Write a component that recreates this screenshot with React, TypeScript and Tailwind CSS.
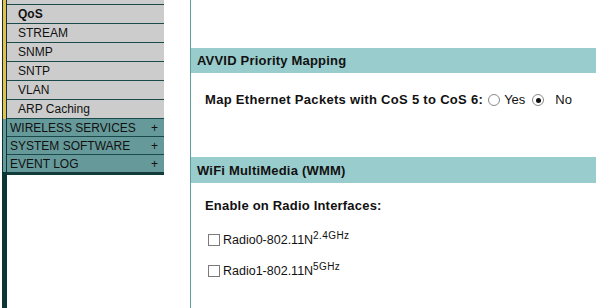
import React from "react";

const subItems = ["STREAM", "SNMP", "SNTP", "VLAN", "ARP Caching"];
const topItems = ["WIRELESS SERVICES", "SYSTEM SOFTWARE", "EVENT LOG"];

const Radio: React.FC<{ checked?: boolean }> = ({ checked }) => (
  <span className="w-[12px] h-[12px] rounded-full border border-[#8a8a8a] bg-white flex items-center justify-center shrink-0">
    {checked && <span className="w-[5px] h-[5px] rounded-full bg-[#111]" />}
  </span>
);

const Checkbox: React.FC = () => (
  <span className="w-[12px] h-[12px] border border-[#7a7a7a] bg-white shrink-0" />
);

const App: React.FC = () => {
  return (
    <div className="flex w-[596px] h-[308px] bg-white overflow-hidden text-[#111] font-['Liberation_Sans',Arial,sans-serif]">
      {/* left nav */}
      <div className="w-[190px] shrink-0 flex pl-[2px]">
        <div className="w-[5px] h-full bg-[#0d3535] flex flex-col px-[1px]">
          <div className="h-[119px] bg-[#e8c050]" />
          <div className="h-[53px] bg-[#669999]" />
        </div>
        <div className="w-[157px] flex flex-col text-[12px]">
          <div className="h-[5px] bg-[#cccccc] border-b border-[#1a4a4a]" />
          <div className="h-[19px] bg-[#cccccc] border-b border-[#1a4a4a] flex items-center pl-[11px] font-bold">
            QoS
          </div>
          {subItems.map((s) => (
            <div
              key={s}
              className="h-[19px] bg-[#cccccc] border-b border-[#1a4a4a] flex items-center pl-[11px]"
            >
              {s}
            </div>
          ))}
          {topItems.map((s, i) => (
            <div
              key={s}
              className={
                i === topItems.length - 1
                  ? "h-[20px] bg-[#669999] border-b-[3px] border-[#123c3c] flex items-center justify-between pl-[3px] pr-[6px]"
                  : "h-[18px] bg-[#669999] border-b border-[#1a4a4a] flex items-center justify-between pl-[3px] pr-[6px]"
              }
            >
              <span>{s}</span>
              <span>+</span>
            </div>
          ))}
        </div>
      </div>

      {/* right content */}
      <div className="flex-1 border-l border-[#5f9e9e] flex flex-col">
        <div className="h-[48px]" />
        <div className="h-[25px] bg-[#99cccc] flex items-center pl-[6px] pt-[1px] text-[13px] font-bold tracking-[0.2px]">
          AVVID Priority Mapping
        </div>
        <div className="h-[84px] pl-[14px] pt-[19px]">
          <div className="h-[16px] flex items-center text-[13px]">
            <span className="font-bold tracking-[0.3px]">Map Ethernet Packets with CoS 5 to CoS 6:</span>
            <span className="ml-[5px]">
              <Radio />
            </span>
            <span className="ml-[4px]">Yes</span>
            <span className="ml-[7px]">
              <Radio checked />
            </span>
            <span className="ml-[11px]">No</span>
          </div>
        </div>
        <div className="h-[26px] bg-[#99cccc] flex items-center pl-[6px] pt-[1px] text-[13px] font-bold tracking-[0.2px]">
          WiFi MultiMedia (WMM)
        </div>
        <div className="pl-[14px] pt-[15px] flex flex-col">
          <div className="h-[16px] flex items-center text-[13px] font-bold tracking-[0.2px]">
            Enable on Radio Interfaces:
          </div>
          <div className="h-[16px] mt-[18px] flex items-center text-[12.5px] pl-[3px]">
            <Checkbox />
            <span className="ml-[3px]">
              Radio0-802.11N
              <sup className="text-[10px] tracking-[0.4px] align-baseline relative -top-[5px]">2.4GHz</sup>
            </span>
          </div>
          <div className="h-[16px] mt-[15px] flex items-center text-[12.5px] pl-[3px]">
            <Checkbox />
            <span className="ml-[3px]">
              Radio1-802.11N
              <sup className="text-[10px] tracking-[0.4px] align-baseline relative -top-[5px]">5GHz</sup>
            </span>
          </div>
        </div>
      </div>
    </div>
  );
};

export default App;
